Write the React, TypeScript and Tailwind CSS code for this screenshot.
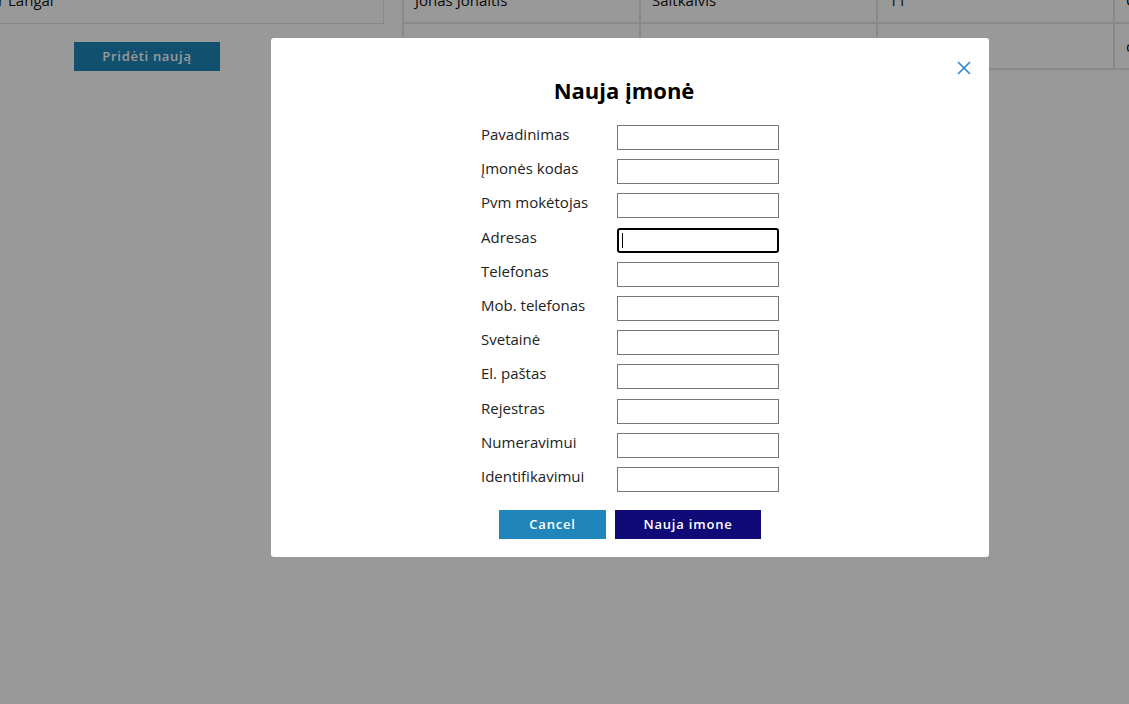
const fields = [
  "Pavadinimas",
  "Įmonės kodas",
  "Pvm mokėtojas",
  "Adresas",
  "Telefonas",
  "Mob. telefonas",
  "Svetainė",
  "El. paštas",
  "Rejestras",
  "Numeravimui",
  "Identifikavimui",
]

const rows = [
  ["Jonas Jonaitis", "Šaltkalvis", "11", "C"],
  ["", "", "", "c"],
]

export default function App() {
  return (
    <div className="relative w-[1129px] h-[704px] overflow-hidden bg-white font-['Open_Sans',sans-serif] text-[#111]">
      {/* page behind the modal */}
      <div className="flex -mt-[22px]">
        <div className="w-[384px] shrink-0">
          <div className="h-[46px] border-r border-b border-[#e4e4e4] flex items-center text-[15px] -ml-[2px]">
            r Langai
          </div>
          <button className="ml-[74px] mt-[18px] w-[146px] h-[29px] bg-[#1f85ba] text-white text-[13px] font-semibold tracking-[0.7px]">
            Pridėti naują
          </button>
        </div>
        <div className="ml-[18px] flex flex-col">
          {rows.map((r, i) => (
            <div key={i} className="flex border-b-2 border-[#e4e4e4]">
              {r.map((c, j) => (
                <div key={j} className="w-[237px] h-[44px] shrink-0 border-l-2 border-[#e4e4e4] px-[11px] flex items-center text-[15px]">
                  {c}
                </div>
              ))}
            </div>
          ))}
        </div>
      </div>

      {/* overlay + modal */}
      <div className="absolute inset-0 bg-black/40" />
      <div className="absolute left-[271px] top-[38px] w-[718px] h-[519px] bg-white rounded-[3px] flex flex-col items-center pt-[38px]">
        <button className="absolute right-[17px] top-[22px] text-[#2a86cf]">
          <svg width="16" height="16" viewBox="0 0 16 16" fill="none" stroke="currentColor" strokeWidth="1.6">
            <path d="M2 2 L14 14 M14 2 L2 14" />
          </svg>
        </button>
        <h2 className="text-[22px] leading-[28px] font-bold text-black -ml-[12px]">Nauja įmonė</h2>
        <div className="mt-[21px] grid grid-cols-[136px_162px] gap-y-[9.2px]">
          {fields.map((f) => (
            <div key={f} className="contents">
              <label className="text-[15px] leading-[18px] text-[#222]">{f}</label>
              {f === "Adresas" ? (
                <div className="h-[25px] border-2 border-black rounded-[3px] flex items-center pl-[3px]">
                  <span className="w-px h-[15px] bg-black" />
                </div>
              ) : (
                <input className="h-[25px] border border-[#767676] bg-white outline-none" />
              )}
            </div>
          ))}
        </div>
        <div className="mt-[18px] flex gap-[9px]">
          <button className="w-[107px] h-[29px] bg-[#1f85ba] text-white text-[13px] font-semibold tracking-[0.8px]">
            Cancel
          </button>
          <button className="w-[146px] h-[29px] bg-[#0f0a78] text-white text-[13px] font-semibold tracking-[0.8px]">
            Nauja imone
          </button>
        </div>
      </div>
    </div>
  )
}
